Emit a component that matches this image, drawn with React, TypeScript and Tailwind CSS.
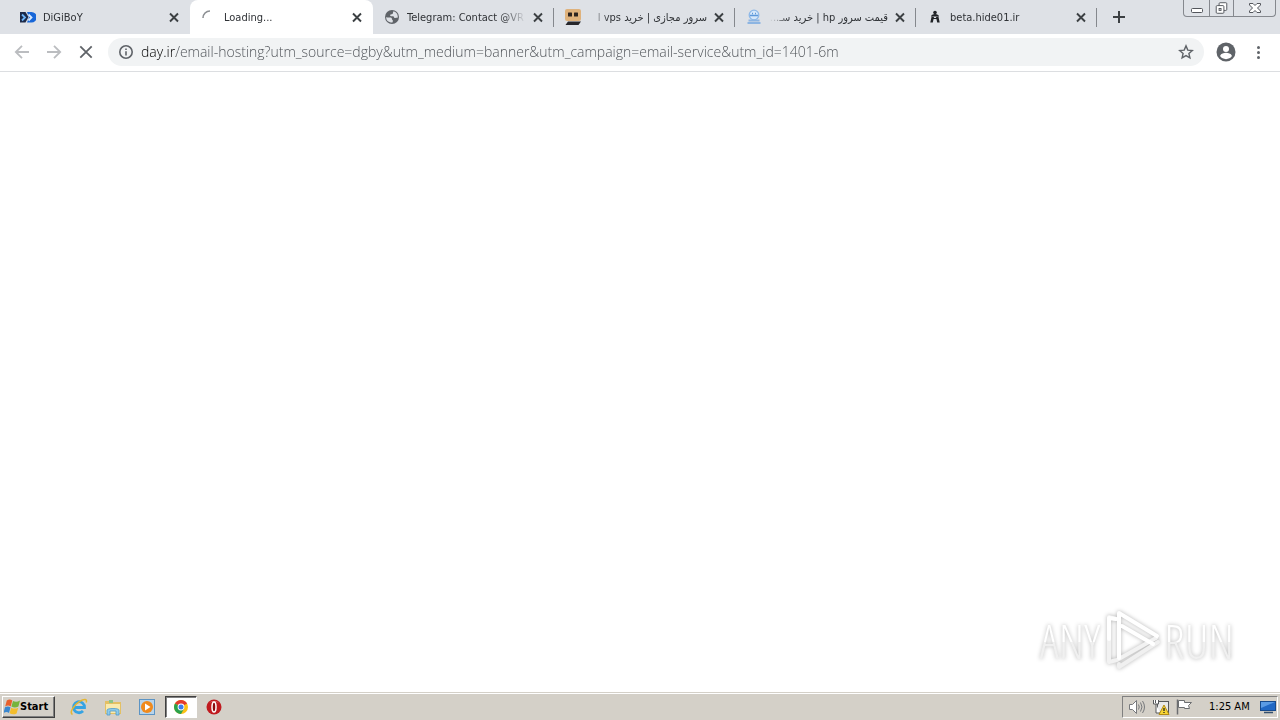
import type { ReactNode } from "react";

const UI_FONT = "font-['DejaVu_Sans_Condensed','DejaVu_Sans','Noto_Sans',sans-serif]";

function CloseIcon() {
  return (
    <svg viewBox="0 0 16 16" className="size-4" stroke="#3c4043" strokeWidth="1.900" fill="none" aria-hidden="true">
      <path d="M4 4.500l8 8M12 4.500l-8 8" />
    </svg>
  );
}

function DigiboyIcon() {
  return (
    <svg viewBox="0 0 16 16" className="size-4" aria-hidden="true">
      <path d="M0 3h5.500l3 5-3 5.500H0z" fill="#1c2a48" />
      <path d="M2 5.500l3 3-3 3" stroke="#6db4f7" strokeWidth="1.800" fill="none" />
      <path d="M7 3h4.500a5 5 0 0 1 0 10.500H7l2-5z" fill="#1766d8" />
      <path d="M8.500 5.500l3 3-3 3" stroke="#d6e9ff" strokeWidth="1.800" fill="none" />
    </svg>
  );
}

function SpinnerIcon() {
  return (
    <svg viewBox="0 0 16 16" className="size-4" aria-hidden="true">
      <path d="M2 9A7 7 0 0 1 9 2" stroke="#8c8f93" strokeWidth="1.600" fill="none" />
    </svg>
  );
}

function GlobeIcon() {
  return (
    <svg viewBox="0 0 16 16" className="size-4" aria-hidden="true">
      <circle cx="8" cy="8" r="7" fill="#5f6368" />
      <path d="M2.300 8c2 1.200 3.400-.2 5 .8 1.100.8.200 1.700 1.200 2.200.8.400.2 2.300-.1 2.600C4 13.500 1.900 11 2.300 8z" fill="#dee1e6" />
      <path d="M9.500 2.300c2.600.6 4.300 2.900 4.300 5.400l-.4 1.300c-1-.6-1.600.4-2.800-.1-.9-.4-.4-1.500-1.500-1.700-1.200-.1-2.600.2-3-.7-.3-1 1.400-1.300 2.300-1.500.9-.2.300-2 1.100-2.700z" fill="#dee1e6" />
    </svg>
  );
}

function RobotIcon() {
  return (
    <svg viewBox="0 0 16 16" className="size-4" aria-hidden="true">
      <rect x="0" y="0" width="16" height="12" rx="2" fill="#dfb27c" />
      <rect x="3" y="3.500" width="4" height="4" rx=".5" fill="#2d2420" />
      <rect x="9" y="3.500" width="4" height="4" rx=".5" fill="#2d2420" />
      <path d="M3 12.500h13L13.500 16H.5z" fill="#26262b" />
    </svg>
  );
}

function ServerIcon() {
  return (
    <svg viewBox="0 0 16 16" className="size-4" aria-hidden="true">
      <circle cx="8" cy="6" r="4.800" fill="#d5e7fa" stroke="#8db8e8" strokeWidth="1.300" />
      <path d="M4 6.500h8M6 4.500h1M9 4.500h1" stroke="#5d98da" strokeWidth="1.400" />
      <path d="M2.500 11.500h11M1.500 14h13" stroke="#8db5e2" strokeWidth="2" />
    </svg>
  );
}

function HideIcon() {
  return (
    <svg viewBox="0 0 16 16" className="size-4" aria-hidden="true">
      <circle cx="8" cy="3.500" r="1.800" fill="#202226" />
      <path d="M4 7.500c0-1.600 2-2.500 4-2.500s4 .9 4 2.500z" fill="#202226" />
      <path d="M4.600 7.500L3.300 13.500h2.500L7 8zM11.400 7.500l1.300 6h-2.500L9 8z" fill="#202226" />
      <path d="M6 9.500h4" stroke="#202226" />
    </svg>
  );
}

type TabProps = { icon: ReactNode; title: string; active?: boolean; rtl?: boolean; divider?: boolean };

function Tab({ icon, title, active, rtl, divider }: TabProps) {
  return (
    <div
      className={`relative flex h-[34px] min-w-0 items-center pl-[11px] pr-2 ${
        active ? "w-[183px] rounded-t-lg bg-white" : "w-[181px]"
      }`}
    >
      <button type="button" role="tab" aria-selected={!!active} className="flex min-w-0 flex-1 items-center gap-[7px]">
        <span className="shrink-0">{icon}</span>
        <span
          dir={rtl ? "rtl" : "ltr"}
          className={`min-w-0 flex-1 overflow-hidden whitespace-nowrap pt-px text-start text-[11px] leading-4 text-[#2f3236] ${
            rtl
              ? "[mask-image:linear-gradient(to_left,black_82%,transparent)]"
              : "[mask-image:linear-gradient(to_right,black_80%,transparent)]"
          }`}
        >
          {title}
        </span>
      </button>
      <button type="button" aria-label={`Close ${title}`} className="ml-1 shrink-0">
        <CloseIcon />
      </button>
      {divider && <span className="absolute right-0 top-2 h-[19px] w-px bg-[#85888d]" />}
    </div>
  );
}

function WindowControls() {
  return (
    <div className="flex h-[17px] w-[93px] self-start rounded-b-[4px] border border-t-0 border-[#85888e] bg-[#dfe2e7]">
      <button type="button" aria-label="Minimize" className="flex w-[25px] justify-center">
        <svg viewBox="0 0 24 16" className="h-4 w-6" aria-hidden="true">
          <rect x="6.500" y="8.500" width="11" height="4" rx="1" fill="#fff" stroke="#53565c" />
        </svg>
      </button>
      <button type="button" aria-label="Restore" className="flex w-[25px] justify-center border-x border-[#85888e]">
        <svg viewBox="0 0 24 16" className="h-4 w-6" fill="#fff" stroke="#53565c" aria-hidden="true">
          <rect x="9.500" y="2.500" width="8" height="8" rx="1" />
          <rect x="6.500" y="5.500" width="8" height="8" rx="1" />
          <rect x="9.500" y="8.500" width="2" height="2" />
        </svg>
      </button>
      <button type="button" aria-label="Close window" className="flex flex-1 justify-center">
        <svg viewBox="0 0 24 16" className="h-4 w-6" fill="#fff" stroke="#53565c" aria-hidden="true">
          <path d="M6.500 3.500h3.500l2 2 2-2h3.500v1.500l-3 3 3 3v1.500H14l-2-2-2 2H6.500V11l3-3-3-3z" />
        </svg>
      </button>
    </div>
  );
}

function TabStrip() {
  return (
    <div className={`flex h-[34px] bg-[#dee1e6] pl-[9px] ${UI_FONT}`}>
      <div role="tablist" className="flex min-w-0">
        <Tab icon={<DigiboyIcon />} title="DiGiBoY" />
        <Tab icon={<SpinnerIcon />} title="Loading..." active />
        <Tab icon={<GlobeIcon />} title="Telegram: Contact @VR" divider />
        <Tab icon={<RobotIcon />} title="سرور مجازی | خرید vps ا" rtl divider />
        <Tab icon={<ServerIcon />} title="قیمت سرور hp | خرید سـ..." rtl divider />
        <Tab icon={<HideIcon />} title="beta.hide01.ir" divider />
      </div>
      <button type="button" aria-label="New tab" className="ml-[14px] shrink-0">
        <svg viewBox="0 0 16 16" className="size-4" stroke="#3c4043" strokeWidth="2" aria-hidden="true">
          <path d="M8 2v12M2 8h12" />
        </svg>
      </button>
      <div className="ml-auto shrink-0 pr-1">
        <WindowControls />
      </div>
    </div>
  );
}

function Toolbar() {
  return (
    <div className="flex h-[38px] items-center border-b border-[#dcdee1] bg-white px-[14px] pb-px">
      <div className="flex items-center gap-4">
        <button type="button" aria-label="Back">
          <svg viewBox="0 0 16 16" className="size-4" fill="none" stroke="#bbbdc0" strokeWidth="1.800" aria-hidden="true">
            <path d="M15 8H2.500M8 1.800L1.800 8 8 14.200" />
          </svg>
        </button>
        <button type="button" aria-label="Forward">
          <svg viewBox="0 0 16 16" className="size-4" fill="none" stroke="#bbbdc0" strokeWidth="1.800" aria-hidden="true">
            <path d="M1 8h12.500M8 1.800L14.200 8 8 14.200" />
          </svg>
        </button>
        <button type="button" aria-label="Stop loading">
          <svg viewBox="0 0 16 16" className="size-4" fill="none" stroke="#5f6368" strokeWidth="1.800" aria-hidden="true">
            <path d="M2.300 2.300l11.400 11.400M13.700 2.300L2.300 13.700" />
          </svg>
        </button>
      </div>
      <div className="ml-[14px] flex h-7 min-w-0 flex-1 items-center rounded-full bg-[#f1f3f4] px-[10px]">
        <button type="button" aria-label="View site information">
          <svg viewBox="0 0 16 16" className="size-4" fill="none" stroke="#5f6368" strokeWidth="1.600" aria-hidden="true">
            <circle cx="8" cy="8" r="6.200" />
            <path d="M8 7.200v4.200M8 4.400V6" />
          </svg>
        </button>
        <input
          type="text"
          aria-label="Address and search bar"
          defaultValue="day.ir/email-hosting?utm_source=dgby&utm_medium=banner&utm_campaign=email-service&utm_id=1401-6m"
          className="ml-[7px] h-6 min-w-0 flex-1 bg-[linear-gradient(to_right,#000000_35px,#4a4e53_35px)] bg-clip-text pb-[2px] font-['Open_Sans','Noto_Sans',sans-serif] text-[14px] font-light text-transparent outline-none"
        />
        <button type="button" aria-label="Bookmark this tab">
          <svg viewBox="0 0 16 16" className="size-4" fill="none" stroke="#5f6368" strokeWidth="1.400" aria-hidden="true">
            <path d="M8 1.900l1.800 4.200 4.500.4-3.400 3 1 4.400L8 11.600l-3.900 2.300 1-4.400-3.400-3 4.500-.4z" />
          </svg>
        </button>
      </div>
      <button type="button" aria-label="Profile" className="ml-3">
        <svg viewBox="0 0 20 20" className="size-5" aria-hidden="true">
          <circle cx="10" cy="10" r="9.500" fill="#5f6368" />
          <circle cx="10" cy="7" r="3" fill="#fff" />
          <path d="M4 14c1-2.600 3.800-3.200 6-3.200s5 .6 6 3.200a7.300 7.300 0 0 1-12 0z" fill="#fff" />
        </svg>
      </button>
      <button type="button" aria-label="Menu" className="ml-[14px]">
        <svg viewBox="0 0 16 16" className="size-4" fill="#5f6368" aria-hidden="true">
          <circle cx="8.500" cy="3.500" r="1.500" />
          <circle cx="8.500" cy="8.500" r="1.500" />
          <circle cx="8.500" cy="13.500" r="1.500" />
        </svg>
      </button>
    </div>
  );
}

function Watermark() {
  const word =
    "bg-[linear-gradient(to_bottom,#ffffff_52%,#f0f0f0_52%)] bg-clip-text text-transparent";
  return (
    <div className="absolute bottom-[19px] right-[46px] flex items-center gap-[2px] font-['Noto_Sans_ExtraCondensed_Light','Noto_Sans_ExtraCondensed','Open_Sans_Condensed_Light','Roboto_Condensed_Light','Open_Sans_Condensed','Liberation_Sans_Narrow',sans-serif] text-[48px] font-light leading-[64px] drop-shadow-[0_0_2px_#b4b4b4]">
      <span className={word}>ANY</span>
      <svg viewBox="0 0 60 64" className="h-16 w-[60px]" fill="none" strokeLinejoin="round" strokeLinecap="round" aria-hidden="true">
        <path d="M17 55v3L56 33" stroke="#f0f0f0" strokeWidth="4" />
        <path d="M14 10L7 8v45l8-2L54 29" stroke="#f2f2f2" strokeWidth="4" />
        <path d="M7 30V9l7 1" stroke="#fff" strokeWidth="4" />
        <path d="M17 49V4l38 23M20 17l31 18" stroke="#fff" strokeWidth="4" />
      </svg>
      <span className={word}>RUN</span>
    </div>
  );
}

function IeIcon() {
  return (
    <svg viewBox="0 0 18 18" className="size-[18px]" fill="none" aria-hidden="true">
      <path d="M4.500 9.500h10A5.500 5.500 0 1 0 13 13" stroke="#35a3e3" strokeWidth="2.800" />
      <path d="M2.500 16.500C-1 14.500 4 7 9 3.800c5-3.100 8.500-3.200 7.200.7" stroke="#e4b632" strokeWidth="1.500" />
    </svg>
  );
}

function ExplorerIcon() {
  return (
    <svg viewBox="0 0 18 18" className="size-[18px]" aria-hidden="true">
      <path d="M1 3h6l1 1h9v12H1z" fill="#e3c064" />
      <path d="M5 2h4v3H5z" fill="#8cc487" />
      <path d="M2 6h14v9H2z" fill="#f9eaae" />
      <path d="M3 17v-5c0-2 12-2 12 0v5h-3v-4H6v4z" fill="#8fcbea" stroke="#4c9bcb" strokeWidth=".8" />
    </svg>
  );
}

function MediaIcon() {
  return (
    <svg viewBox="0 0 18 18" className="size-[18px]" aria-hidden="true">
      <rect x="1.500" y="1.500" width="15" height="15" fill="#b8d4ea" stroke="#5c94c4" />
      <circle cx="9" cy="9" r="6" fill="#f08a1c" />
      <path d="M7 5.500v7L12.500 9z" fill="#fff" />
    </svg>
  );
}

function ChromeIcon() {
  return (
    <svg viewBox="0 0 16 16" className="size-4" aria-hidden="true">
      <circle cx="8" cy="8" r="7" fill="#fbc116" />
      <path d="M8 8L1.940 4.500A7 7 0 0 1 14.060 4.500z" fill="#e33b2e" />
      <path d="M8 8L1.940 4.500A7 7 0 0 0 8 15l3.200-5.500z" fill="#2ba24c" />
      <circle cx="8" cy="8" r="3.400" fill="#fff" />
      <circle cx="8" cy="8" r="2.500" fill="#3b7ded" />
    </svg>
  );
}

function OperaIcon() {
  return (
    <svg viewBox="0 0 16 16" className="size-4" aria-hidden="true">
      <circle cx="8" cy="8" r="7.500" fill="#c01a1f" />
      <path d="M3 4a7 7 0 0 1 10 0 12 12 0 0 0-10 0z" fill="#e2797a" />
      <ellipse cx="8" cy="8" rx="2" ry="5" fill="#8d0a0e" stroke="#fff" strokeWidth="1.500" />
    </svg>
  );
}

function WindowsFlag() {
  return (
    <svg viewBox="0 0 16 16" className="size-4" aria-hidden="true">
      <path d="M2.800 1.500c2-1.400 3.800-1.300 5.500 0L6.700 7.500C5 6.300 3.200 6.300 1.200 7.500z" fill="#e8602c" />
      <path d="M9 2c2.200 1.200 4.600 1 7-.4l-1.600 6c-2.400 1.200-4.600 1.300-7 0z" fill="#76b43c" />
      <path d="M1 8.300c2-1.200 3.800-1.200 5.500 0L5 14c-1.700-1.200-3.500-1.200-5.500 0z" fill="#3a87cf" />
      <path d="M7.200 8.700c2.400 1.200 4.600 1.200 7 0l-1.600 5.700c-2.400 1.300-4.700 1.200-7-.2z" fill="#f3bd2c" />
    </svg>
  );
}

function Taskbar() {
  return (
    <footer className="flex h-[28px] shrink-0 items-center border-t border-[#d4d0c8] bg-[#d4d0c8] px-[2px] pt-px font-['DejaVu_Sans_Condensed','DejaVu_Sans',sans-serif] shadow-[inset_0_1px_0_#ffffff]">
      <button
        type="button"
        className="flex h-[22px] w-[53px] items-center border border-b-[#404040] border-l-white border-r-[#404040] border-t-white pl-px text-[11px] font-bold text-black shadow-[inset_-1px_-1px_0_#808080]"
      >
        <WindowsFlag />
        Start
      </button>
      <div className="ml-[15px] flex items-center gap-4">
        <button type="button" aria-label="Internet Explorer"><IeIcon /></button>
        <button type="button" aria-label="Windows Explorer"><ExplorerIcon /></button>
        <button type="button" aria-label="Media Player"><MediaIcon /></button>
      </div>
      <button
        type="button"
        aria-label="Google Chrome"
        className="ml-[9px] flex h-[22px] w-8 items-center justify-center border border-b-white border-l-[#404040] border-r-white border-t-[#404040] bg-white shadow-[inset_1px_1px_0_#808080]"
      >
        <ChromeIcon />
      </button>
      <button type="button" aria-label="Opera" className="ml-[9px]"><OperaIcon /></button>
      <div className="ml-auto flex h-[22px] w-[156px] items-center border border-b-white border-l-[#808080] border-r-white border-t-[#808080] pl-[6px]">
        <button type="button" aria-label="Volume">
          <svg viewBox="0 0 18 16" className="h-4 w-[18px]" fill="none" stroke="#77797c" aria-hidden="true">
            <path d="M.5 5.500h3l4-4v13l-4-4h-3z" fill="#fff" />
            <path d="M9.500 5.500q1.500 2.500 0 5M11.500 3.500q3 4.500 0 9M13.500 2q4 6 0 12" />
          </svg>
        </button>
        <button type="button" aria-label="Network" className="ml-[6px]">
          <svg viewBox="0 0 18 16" className="h-4 w-[18px]" aria-hidden="true">
            <rect x="4.500" y="2.500" width="11" height="11" fill="#e9e9e9" stroke="#56585b" />
            <path d="M.5 1v4h5V1M2.500 1v3M3 5v9h4" fill="#fff" stroke="#56585b" />
            <path d="M11 6l5 9.500H6z" fill="#f7d535" stroke="#b28b15" />
            <path d="M11 9v3M11 13v1" stroke="#222" strokeWidth="1.300" />
          </svg>
        </button>
        <button type="button" aria-label="Action Center" className="ml-[5px]">
          <svg viewBox="0 0 18 16" className="h-4 w-[18px]" fill="#fff" stroke="#6c6e71" aria-hidden="true">
            <path d="M1.500 .5v15" strokeWidth="1.500" />
            <path d="M2.500 1.500h6v2h7l-3 3 1 3h-5V8.500h-6z" />
          </svg>
        </button>
        <time className="ml-[15px] whitespace-nowrap text-[11px] leading-4 text-black">1:25 AM</time>
        <button type="button" aria-label="Show desktop" className="ml-auto mr-px">
          <svg viewBox="0 0 16 14" className="h-[14px] w-4" aria-hidden="true">
            <rect x=".5" y="1.500" width="15" height="9" fill="#2168c4" stroke="#174a8c" />
            <path d="M1 2h14L1 8z" fill="#5b9be4" />
            <path d="M4 12.500h9" stroke="#35506e" strokeWidth="1.500" />
          </svg>
        </button>
      </div>
    </footer>
  );
}

export default function App() {
  return (
    <div className="flex min-h-screen flex-col bg-white">
      <header>
        <TabStrip />
        <Toolbar />
      </header>
      <main className="relative flex-1 bg-white">
        <Watermark />
      </main>
      <Taskbar />
    </div>
  );
}
